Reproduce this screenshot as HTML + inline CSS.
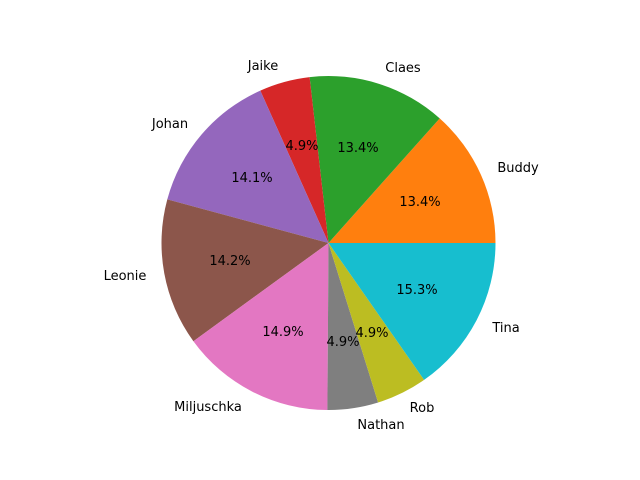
<!DOCTYPE html>
<html><head><style>html,body{margin:0;padding:0;background:#fff;}svg{display:block;}text{font-family:"DejaVu Sans","Liberation Sans",sans-serif;font-size:13px;fill:#000;text-anchor:middle;}</style></head>
<body>
<svg width="640" height="480" viewBox="0 0 640 480" xmlns="http://www.w3.org/2000/svg">
<rect width="640" height="480" fill="#fff"/>
<g>
<path d="M328.5 243 L495.5 243 A167 167 0 0 0 439.7 118.4 Z" fill="#ff7f0e"/>
<path d="M328.5 243 L439.7 118.4 A167 167 0 0 0 309.6 77.1 Z" fill="#2ca02c"/>
<path d="M328.5 243 L309.6 77.1 A167 167 0 0 0 260.3 90.6 Z" fill="#d62728"/>
<path d="M328.5 243 L260.3 90.6 A167 167 0 0 0 167.3 199.4 Z" fill="#9467bd"/>
<path d="M328.5 243 L167.3 199.4 A167 167 0 0 0 193.4 341.2 Z" fill="#8c564b"/>
<path d="M328.5 243 L193.4 341.2 A167 167 0 0 0 327.4 410 Z" fill="#e377c2"/>
<path d="M328.5 243 L327.4 410 A167 167 0 0 0 378.1 402.5 Z" fill="#7f7f7f"/>
<path d="M328.5 243 L378.1 402.5 A167 167 0 0 0 424.1 379.9 Z" fill="#bcbd22"/>
<path d="M328.5 243 L424.1 379.9 A167 167 0 0 0 495.5 243 Z" fill="#17becf"/>
</g>
<text x="518" y="172">Buddy</text>
<text x="403" y="72">Claes</text>
<text x="263" y="70">Jaike</text>
<text x="170" y="128">Johan</text>
<text x="125" y="280">Leonie</text>
<text x="208" y="411">Miljuschka</text>
<text x="381" y="429">Nathan</text>
<text x="422" y="412">Rob</text>
<text x="506" y="332">Tina</text>
<text x="420" y="206">13.4%</text>
<text x="358" y="152">13.4%</text>
<text x="302" y="150">4.9%</text>
<text x="252" y="182">14.1%</text>
<text x="230" y="265">14.2%</text>
<text x="283" y="336">14.9%</text>
<text x="343" y="346">4.9%</text>
<text x="372" y="337">4.9%</text>
<text x="417" y="294">15.3%</text>
</svg>
</body></html>
